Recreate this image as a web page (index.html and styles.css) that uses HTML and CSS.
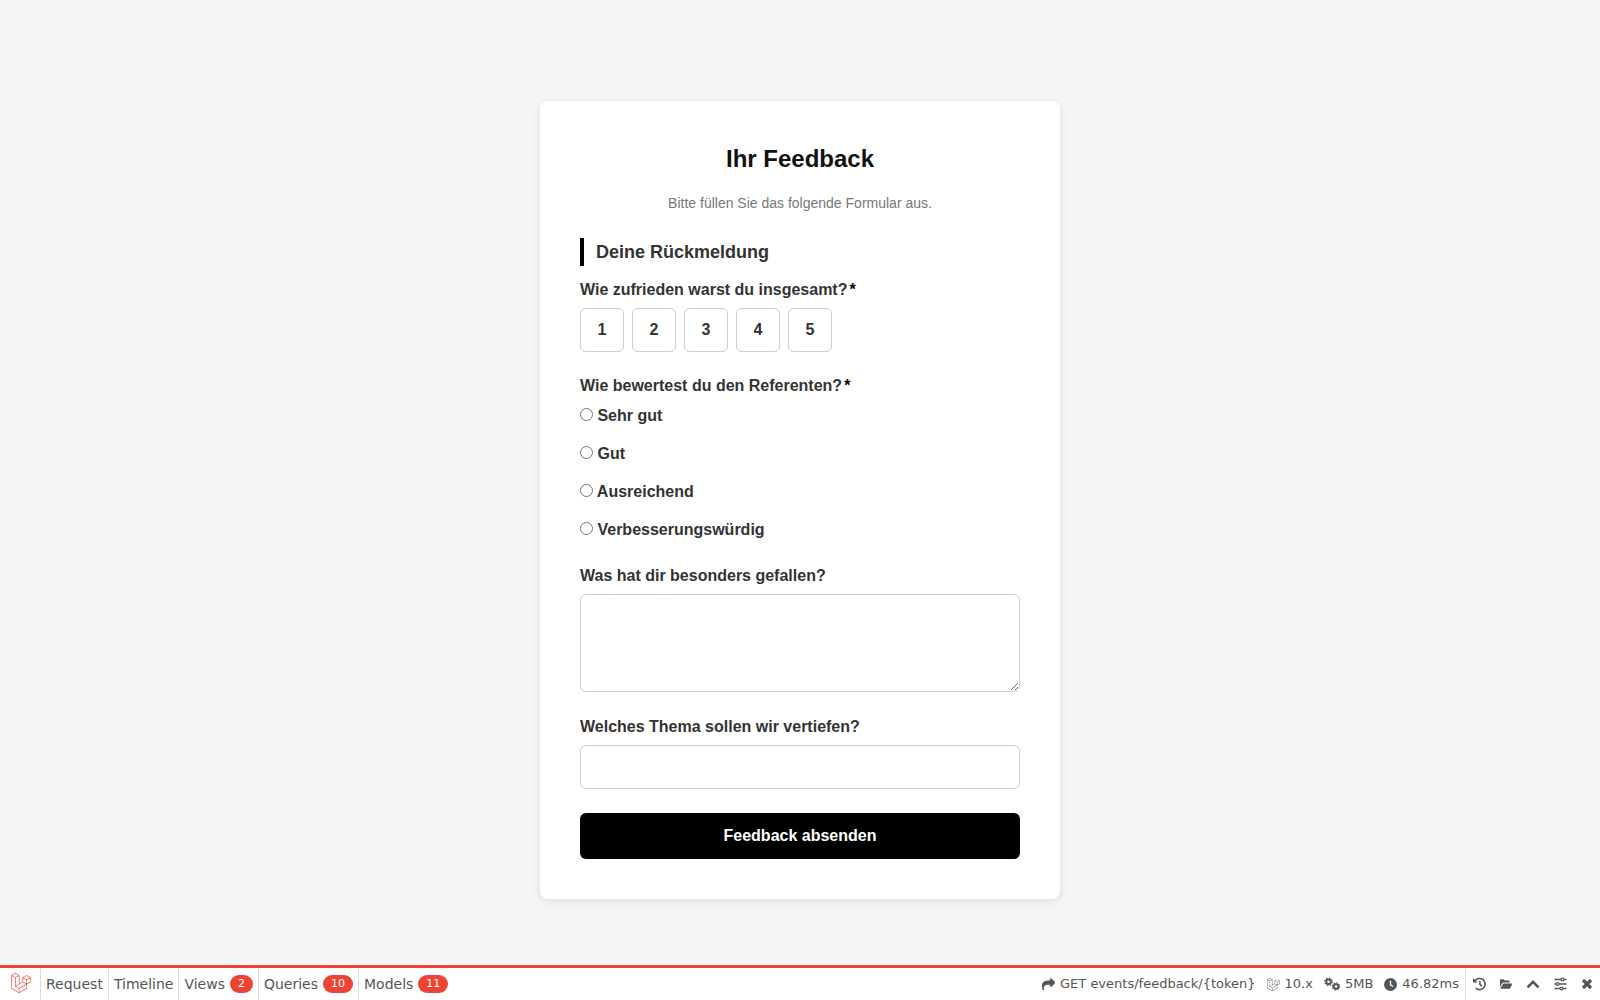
FILE: index.html
```html
<!DOCTYPE html>
<html lang="de">
<head>
<meta charset="utf-8">
<meta name="viewport" content="width=device-width, initial-scale=1">
<title>Ihr Feedback</title>
<link rel="stylesheet" href="styles.css">
</head>
<body>
<svg width="0" height="0" class="sprite" aria-hidden="true">
  <symbol id="laravel" viewBox="0 0 24 24"><path d="M23.642 5.43a.364.364 0 01.014.1v5.149c0 .135-.073.26-.189.326l-4.323 2.49v4.934a.378.378 0 01-.188.326L9.93 23.949a.316.316 0 01-.066.027c-.008.002-.016.008-.024.01a.348.348 0 01-.192 0c-.011-.002-.02-.008-.03-.012-.02-.008-.042-.014-.062-.025L.533 18.755a.376.376 0 01-.189-.326V2.974c0-.033.005-.066.014-.098.003-.012.01-.02.014-.032a.369.369 0 01.023-.058c.004-.013.015-.022.023-.033l.033-.045c.012-.01.025-.018.037-.027.014-.012.027-.024.041-.034H.53L5.043.05a.375.375 0 01.375 0L9.93 2.647h.002c.015.01.027.021.04.033l.038.027c.013.014.02.03.033.045.008.011.02.021.025.033.01.02.017.038.024.058.003.011.01.021.013.032.01.031.014.064.014.098v9.652l3.76-2.164V5.527c0-.033.004-.066.013-.098.003-.01.01-.02.013-.032a.487.487 0 01.024-.059c.007-.012.018-.02.025-.033.012-.015.021-.03.033-.043.012-.012.025-.02.037-.028.014-.01.026-.023.041-.032h.001l4.513-2.598a.375.375 0 01.375 0l4.513 2.598c.016.01.027.021.042.031.012.01.025.018.036.028.013.014.022.03.034.044.008.012.019.021.024.033.011.02.018.04.024.06.006.01.012.021.015.032zm-.74 5.032V6.179l-1.578.908-2.182 1.256v4.283zm-4.51 7.75v-4.287l-2.147 1.225-6.126 3.498v4.325zM1.093 3.624v14.588l8.273 4.761v-4.325l-4.322-2.445-.002-.003H5.04c-.014-.01-.025-.021-.04-.031-.011-.01-.024-.018-.035-.027l-.001-.002c-.013-.012-.021-.025-.031-.04-.01-.011-.021-.022-.028-.036h-.003c-.008-.014-.013-.031-.02-.047-.006-.016-.014-.027-.018-.043a.49.49 0 01-.008-.057c-.002-.014-.006-.027-.006-.041V5.789l-2.18-1.257zM5.23.81L1.47 2.974l3.76 2.164 3.758-2.164zm1.956 13.505l2.182-1.256V3.624l-1.58.91-2.182 1.255v9.435zm11.581-10.95l-3.76 2.163 3.76 2.163 3.759-2.164zm-.376 4.978L16.21 7.087 14.63 6.18v4.283l2.182 1.256 1.58.908zm-8.65 9.654l5.514-3.148 2.756-1.572-3.757-2.163-4.323 2.489-3.941 2.27z"/></symbol>
</svg>

<main class="page">
  <form class="card">
    <h1 class="title">Ihr Feedback</h1>
    <p class="intro">Bitte füllen Sie das folgende Formular aus.</p>
    <h2 class="section">Deine Rückmeldung</h2>

    <fieldset class="field">
      <legend class="label">Wie zufrieden warst du insgesamt?<span class="required">*</span></legend>
      <div class="scale">
        <label class="score"><input type="radio" name="rating" value="1">1</label>
        <label class="score"><input type="radio" name="rating" value="2">2</label>
        <label class="score"><input type="radio" name="rating" value="3">3</label>
        <label class="score"><input type="radio" name="rating" value="4">4</label>
        <label class="score"><input type="radio" name="rating" value="5">5</label>
      </div>
    </fieldset>

    <fieldset class="field">
      <legend class="label">Wie bewertest du den Referenten?<span class="required">*</span></legend>
      <div class="options">
        <label class="option"><input type="radio" name="speaker"> Sehr gut</label>
        <label class="option"><input type="radio" name="speaker"> Gut</label>
        <label class="option"><input type="radio" name="speaker"> Ausreichend</label>
        <label class="option"><input type="radio" name="speaker"> Verbesserungswürdig</label>
      </div>
    </fieldset>

    <div class="field field-long">
      <label class="label" for="liked">Was hat dir besonders gefallen?</label>
      <textarea class="control" id="liked" rows="4"></textarea>
    </div>

    <div class="field">
      <label class="label" for="topic">Welches Thema sollen wir vertiefen?</label>
      <input class="control" id="topic" type="text">
    </div>

    <button class="submit" type="submit">Feedback absenden</button>
  </form>
</main>

<footer class="debugbar">
  <a class="brand" href="#" aria-label="Laravel"><svg width="20" height="20"><use href="#laravel"/></svg></a>
  <nav class="tabs">
    <a class="tab" href="#">Request</a>
    <a class="tab" href="#">Timeline</a>
    <a class="tab" href="#">Views<span class="badge">2</span></a>
    <a class="tab" href="#">Queries<span class="badge">10</span></a>
    <a class="tab" href="#">Models<span class="badge">11</span></a>
  </nav>
  <div class="stats">
    <span class="stat"><svg width="13" height="13" viewBox="0 0 1792 1792"><path d="M1792 640q0 26-19 45l-512 512q-19 19-45 19t-45-19-19-45V896H928q-98 0-175.500 6t-154 21.500-133 42.500-105.500 69.500-80 101-48.500 138.500-17.500 181q0 55 5 123 0 6 2.500 23.500t2.500 26.500q0 15-8.500 25t-23.500 10q-16 0-28-17-7-9-13-22t-13.500-30-10.500-24Q0 1286 0 1120q0-199 53-333 162-403 875-403h224V128q0-26 19-45t45-19 45 19l512 512q19 19 19 45z" stroke="currentColor" stroke-width="90"/></svg>GET events/feedback/{token}</span>
    <span class="stat"><svg width="13" height="13"><use href="#laravel"/></svg>10.x</span>
    <span class="stat"><svg width="16" height="14" viewBox="0 0 16 14"><g fill="none" stroke="currentColor"><circle cx="4.500" cy="4.800" r="2.300" stroke-width="2"/><circle cx="4.500" cy="4.800" r="3.700" stroke-width="1.300" stroke-dasharray="1.500 1.406"/><circle cx="12" cy="9.500" r="2.300" stroke-width="2"/><circle cx="12" cy="9.500" r="3.600" stroke-width="1.200" stroke-dasharray="1.400 1.427"/></g></svg>5MB</span>
    <span class="stat"><svg width="13" height="13" viewBox="0 0 13 13"><circle cx="6.500" cy="6.500" r="6.500"/><path d="M6.500 2.800v4l2.600 1.700" fill="none" stroke="#fff" stroke-width="1.300"/></svg>46.82ms</span>
  </div>
  <div class="tools">
    <button class="tool" type="button" aria-label="Verlauf"><svg width="14" height="14" viewBox="0 0 14 14"><path d="M3 3.800A5.600 5.600 0 1 1 3.700 11.200M7.900 4v3.300l2 1.900" fill="none" stroke="currentColor" stroke-width="1.600"/><path d="M1 1v4.600h4.600z"/></svg></button>
    <button class="tool" type="button" aria-label="Öffnen"><svg width="14" height="14" viewBox="0 0 14 14"><path d="M1 3q0-.8.8-.8h2.700l1.300 1.300h4q.8 0 .8.800V5.500H4.300q-.7 0-1 .6L1 10.200zM4.300 6.400h8.600q.5 0 .3.500l-2 4.300q-.2.500-.8.500H1.300z"/></svg></button>
    <button class="tool" type="button" aria-label="Ausklappen"><svg width="14" height="14" viewBox="0 0 14 14"><path d="M1.500 10.300L7 4.800l5.500 5.500" fill="none" stroke="currentColor" stroke-width="2.600"/></svg></button>
    <button class="tool" type="button" aria-label="Einstellungen"><svg width="14" height="14" viewBox="0 0 14 14"><path d="M1 2.500h6.500m3 0H13M1 7h1.500m3 0H13M1 11.500h5.500m3 0H13" transform="translate(.5)" stroke="currentColor" stroke-width="1.400"/><g fill="none" stroke="currentColor" stroke-width="1.200"><circle cx="9.500" cy="2.500" r="1.400"/><circle cx="4.500" cy="7" r="1.400"/><circle cx="8.500" cy="11.500" r="1.400"/></g></svg></button>
    <button class="tool" type="button" aria-label="Schließen"><svg width="14" height="14" viewBox="0 0 14 14"><path d="M3 3l8 8M11 3l-8 8" stroke="currentColor" stroke-width="3.200"/></svg></button>
  </div>
</footer>
</body>
</html>
```
FILE: styles.css
```css
* {
  box-sizing: border-box;
}

body {
  margin: 0;
  background: #f5f5f5;
  color: #333;
  font: 16px/19px "Liberation Sans", Arial, sans-serif;
}

.sprite {
  position: absolute;
}

svg {
  fill: currentColor;
}

.page {
  display: flex;
  align-items: center;
  justify-content: center;
  min-height: 100vh;
}

.card {
  width: 100%;
  max-width: 520px;
  padding: 40px;
  background: #fff;
  border-radius: 8px;
  box-shadow: 0 2px 10px rgba(0, 0, 0, 0.1);
}

.title {
  margin: 0 0 16px;
  color: #111;
  font-size: 24px;
  line-height: 36px;
  text-align: center;
}

.intro {
  margin: 0 0 25px;
  color: #777;
  font-size: 14px;
  line-height: 20px;
  text-align: center;
}

.section {
  margin: 0 0 14px;
  padding-left: 12px;
  border-left: 4px solid #000;
  font-size: 18px;
  line-height: 28px;
}

.field {
  min-width: 0;
  margin: 0 0 24px;
  padding: 0;
  border: 0;
}

.field-long {
  margin-bottom: 25px;
}

.label {
  display: block;
  margin-bottom: 9px;
  padding: 0;
  font-weight: bold;
}

.required {
  margin-left: 2px;
  color: #000;
}

.scale {
  display: flex;
  gap: 8px;
}

.score {
  display: grid;
  place-items: center;
  width: 44px;
  height: 44px;
  padding-bottom: 2px;
  border: 1px solid #ccc;
  border-radius: 6px;
  font-weight: bold;
  cursor: pointer;
}

.score input {
  position: absolute;
  opacity: 0;
}

.options {
  display: grid;
  gap: 14px;
}

.option {
  font-weight: bold;
  line-height: 24px;
}

.option input {
  margin: 0;
}

.control {
  display: block;
  width: 100%;
  padding: 12px;
  border: 1px solid #ccc;
  border-radius: 6px;
  font: inherit;
  line-height: 18px;
  resize: vertical;
}

.submit {
  display: block;
  width: 100%;
  padding: 14px;
  border: 0;
  border-radius: 6px;
  background: #000;
  color: #fff;
  font: bold 16px/18px "Liberation Sans", Arial, sans-serif;
}

.debugbar {
  position: fixed;
  right: 0;
  bottom: 0;
  left: 0;
  display: flex;
  height: 35px;
  border-top: 3px solid #eb4432;
  background: #fff;
  color: #555;
  font: 14px/32px "DejaVu Sans", sans-serif;
}

.brand {
  display: flex;
  align-items: center;
  padding: 0 9px 2px 11px;
  color: #eb4432;
}

.tabs,
.stats,
.tools,
.stat {
  display: flex;
  align-items: center;
}

.tab {
  display: flex;
  align-items: center;
  padding: 0 5px;
  border-left: 1px solid #ddd;
  color: inherit;
  text-decoration: none;
}

.badge {
  margin-left: 5px;
  padding: 0 8px;
  border-radius: 9px;
  background: #eb4432;
  color: #fff;
  font-size: 11px;
  line-height: 18px;
}

.stats {
  gap: 11px;
  margin-left: auto;
  padding-right: 6px;
  font-size: 13px;
}

.stat {
  gap: 5px;
}

.tools {
  gap: 13px;
  padding: 0 6px;
  border-left: 1px solid #ddd;
}

.tool {
  display: flex;
  padding: 0;
  border: 0;
  background: none;
  color: inherit;
}
```
